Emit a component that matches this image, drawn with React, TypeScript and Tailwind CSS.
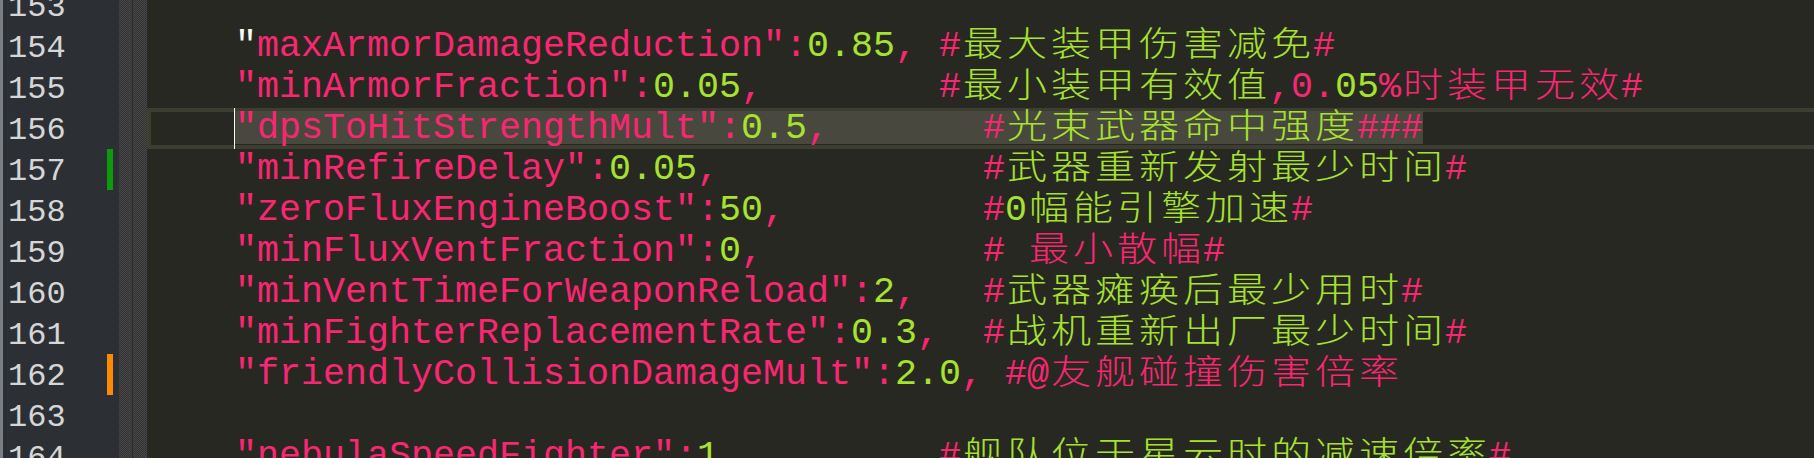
type Seg = [string, string]

const color: Record<string, string> = {
  p: 'text-[#f92672]',
  g: 'text-[#a6e22e]',
  w: 'text-[#f8f8f2]',
}

const sp = (n: number) => ' '.repeat(n)

const lines: { n: number; mark?: string; selected?: boolean; segs: Seg[] }[] = [
  { n: 153, segs: [] },
  {
    n: 154,
    segs: [['w', '"'], ['p', 'maxArmorDamageReduction":'], ['g', '0.85'], ['p', ', #'], ['g', '最大装甲伤害减免'], ['p', '#']],
  },
  {
    n: 155,
    segs: [
      ['p', '"minArmorFraction":'], ['g', '0.05'], ['p', ',' + sp(8) + '#'], ['g', '最小装甲有效值'],
      ['p', ',0.'], ['g', '05'], ['p', '%时装甲无效#'],
    ],
  },
  {
    n: 156,
    selected: true,
    segs: [['p', '"dpsToHitStrengthMult":'], ['g', '0.5'], ['p', ',' + sp(7) + '#'], ['g', '光束武器命中强度'], ['p', '###']],
  },
  {
    n: 157,
    mark: 'bg-[#0b9b0b]',
    segs: [['p', '"minRefireDelay":'], ['g', '0.05'], ['p', ',' + sp(12) + '#'], ['g', '武器重新发射最少时间'], ['p', '#']],
  },
  {
    n: 158,
    segs: [['p', '"zeroFluxEngineBoost":'], ['g', '50'], ['p', ',' + sp(9) + '#'], ['g', '0幅能引擎加速'], ['p', '#']],
  },
  {
    n: 159,
    segs: [['p', '"minFluxVentFraction":'], ['g', '0'], ['p', ',' + sp(10) + '# 最小散幅#']],
  },
  {
    n: 160,
    segs: [['p', '"minVentTimeForWeaponReload":'], ['g', '2'], ['p', ',' + sp(3) + '#'], ['g', '武器瘫痪后最少用时'], ['p', '#']],
  },
  {
    n: 161,
    segs: [['p', '"minFighterReplacementRate":'], ['g', '0.3'], ['p', ',' + sp(2) + '#'], ['g', '战机重新出厂最少时间'], ['p', '#']],
  },
  {
    n: 162,
    mark: 'bg-[#ff8a00]',
    segs: [['p', '"friendlyCollisionDamageMult":'], ['g', '2.0'], ['p', ', #@友舰碰撞伤害倍率']],
  },
  { n: 163, segs: [] },
  {
    n: 164,
    segs: [['p', '"nebulaSpeedFighter":'], ['g', '1'], ['p', ',' + sp(9) + '#'], ['g', '舰队位于星云时的减速倍率'], ['p', '#']],
  },
]

// CJK glyphs fill two columns (44px), drawn a little wide like the editor does
function Text({ text }: { text: string }) {
  const parts = text.split(/([\u3000-\u9fff\uff00-\uffef]+)/)
  return (
    <>
      {parts.map((part, i) =>
        i % 2 === 1
          ? Array.from(part).map((ch, j) => (
              <span
                key={`${i}-${j}`}
                className="inline-block w-[44px] scale-x-[1.18] text-center text-[34px] font-light"
              >
                {ch}
              </span>
            ))
          : part
      )}
    </>
  )
}

function Segs({ segs }: { segs: Seg[] }) {
  return (
    <>
      {segs.map(([c, t], i) => (
        <span key={i} className={color[c]}>
          <Text text={t} />
        </span>
      ))}
    </>
  )
}

export default function App() {
  return (
    <div className="flex h-[458px] w-[1814px] overflow-hidden bg-[#272822] font-['Liberation_Mono','Noto_Sans_CJK_SC',monospace]">
      {/* Gutter */}
      <div className="w-[3px] shrink-0 bg-[#7b7e82]" />
      <div className="w-[116px] shrink-0 bg-[#2c3035]">
        <div className="-mt-[15px]">
          {lines.map((l) => (
            <div key={l.n} className="flex h-[41px]">
              <span className="pl-[5px] pt-[2px] text-[32px] leading-[41px] text-[#d6d6d6]">{l.n}</span>
              {l.mark && <span className={`ml-auto mr-[6px] w-[6px] ${l.mark}`} />}
            </div>
          ))}
        </div>
      </div>
      <div className="flex w-[28px] shrink-0 bg-[repeating-conic-gradient(#474747_0_25%,#333333_0_50%)] bg-[length:2px_2px]">
        <div className="w-[13px]" />
        <div className="w-px bg-[#2a2a2a]" />
      </div>

      {/* Editor */}
      <div className="min-w-0 flex-1">
        <div className="-mt-[15px] text-[36.667px] leading-[41px]">
          {lines.map((l) =>
            l.selected ? (
              <div
                key={l.n}
                className="h-[41px] whitespace-pre shadow-[inset_4px_4px_0_#3e3d32,inset_0_-4px_0_#3e3d32]"
              >
                {'    '}
                <span className="-ml-px inline-block h-[41px] w-px bg-[#f8f8f2] align-top" />
                <span className="bg-[linear-gradient(transparent_4.3px,#49483e_4.3px,#49483e_37.3px,transparent_37.3px)]">
                  <Segs segs={l.segs} />
                </span>
              </div>
            ) : (
              <div key={l.n} className="h-[41px] whitespace-pre">
                {'    '}
                <Segs segs={l.segs} />
              </div>
            )
          )}
        </div>
      </div>
    </div>
  )
}
